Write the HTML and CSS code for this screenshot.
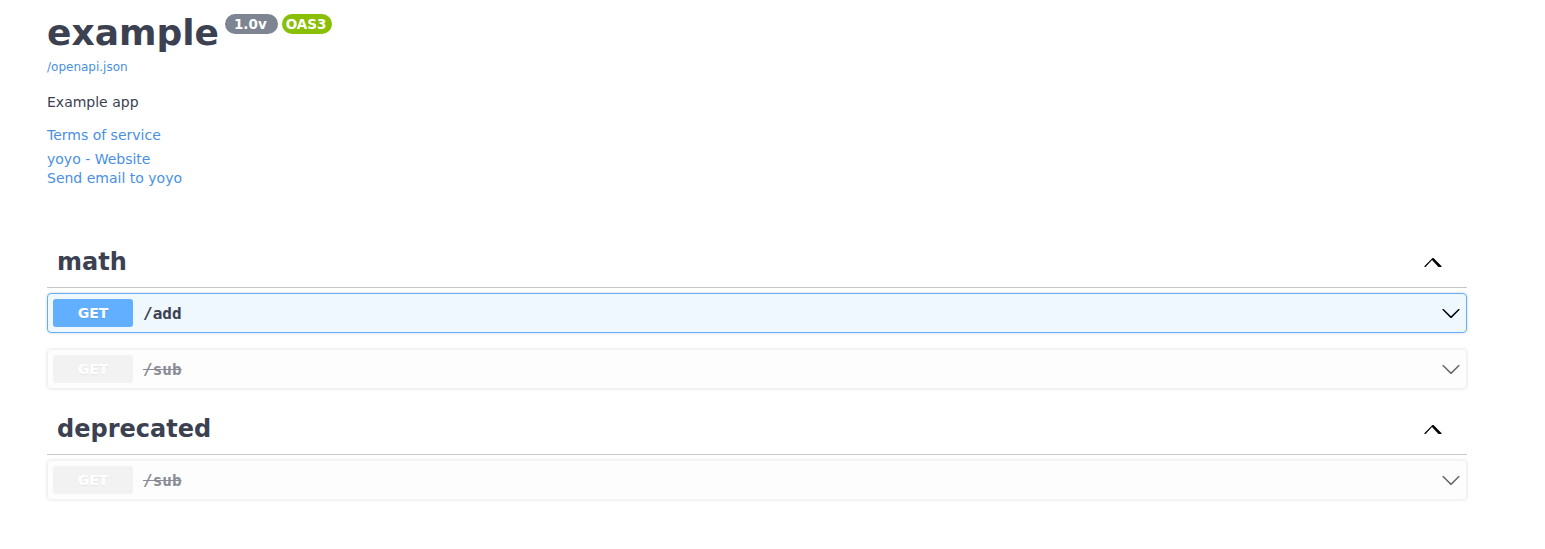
FILE: index.html
```
<!DOCTYPE html>
<html lang="en">
<head>
<meta charset="utf-8">
<title>example</title>
<link rel="stylesheet" href="styles.css">
</head>
<body>
<div class="wrapper">
  <div class="info">
    <div class="title-row">
      <h2 class="title">example</h2>
      <span class="stamp stamp-version">1.0v</span>
      <span class="stamp stamp-oas">OAS3</span>
    </div>
    <a class="spec-link" href="#">/openapi.json</a>
    <p class="description">Example app</p>
    <a class="info-link terms" href="#">Terms of service</a>
    <div class="contact">
      <a class="info-link contact-line" href="#">yoyo - Website</a>
      <a class="info-link contact-line contact-email" href="#">Send email to yoyo</a>
    </div>
  </div>

  <section class="tag-section">
    <h3 class="tag">
      <span class="tag-name">math</span>
      <svg class="tag-arrow" width="20" height="20" viewBox="0 0 20 20"><path d="M17.418 14.908c-.272.268-.709.268-.979 0L10 7.91l-6.439 6.998c-.271.268-.709.268-.979 0-.27-.268-.27-.701 0-.969l7.908-7.830c.27-.268.707-.268.979 0l7.908 7.830c.27.268.27.701 0 .969z"/></svg>
    </h3>
    <div class="opblock opblock-get">
      <span class="method">GET</span>
      <span class="path">/add</span>
      <svg class="op-arrow" width="20" height="20" viewBox="0 0 20 20"><path d="M17.418 6.109c.272-.268.709-.268.979 0s.271.701 0 .969l-7.908 7.83c-.27.268-.707.268-.979 0l-7.908-7.83c-.27-.268-.27-.701 0-.969.271-.268.709-.268.979 0L10 13.25l7.418-7.141z"/></svg>
    </div>
    <div class="opblock opblock-deprecated">
      <span class="method">GET</span>
      <span class="path">/sub</span>
      <svg class="op-arrow" width="20" height="20" viewBox="0 0 20 20"><path d="M17.418 6.109c.272-.268.709-.268.979 0s.271.701 0 .969l-7.908 7.83c-.27.268-.707.268-.979 0l-7.908-7.83c-.27-.268-.27-.701 0-.969.271-.268.709-.268.979 0L10 13.25l7.418-7.141z"/></svg>
    </div>
  </section>

  <section class="tag-section">
    <h3 class="tag">
      <span class="tag-name">deprecated</span>
      <svg class="tag-arrow" width="20" height="20" viewBox="0 0 20 20"><path d="M17.418 14.908c-.272.268-.709.268-.979 0L10 7.91l-6.439 6.998c-.271.268-.709.268-.979 0-.27-.268-.27-.701 0-.969l7.908-7.830c.27-.268.707-.268.979 0l7.908 7.830c.27.268.27.701 0 .969z"/></svg>
    </h3>
    <div class="opblock opblock-deprecated">
      <span class="method">GET</span>
      <span class="path">/sub</span>
      <svg class="op-arrow" width="20" height="20" viewBox="0 0 20 20"><path d="M17.418 6.109c.272-.268.709-.268.979 0s.271.701 0 .969l-7.908 7.83c-.27.268-.707.268-.979 0l-7.908-7.83c-.27-.268-.27-.701 0-.969.271-.268.709-.268.979 0L10 13.25l7.418-7.141z"/></svg>
    </div>
  </section>
</div>
</body>
</html>
```

FILE: styles.css
```
html, body {
  margin: 0;
  padding: 0;
  background: #fff;
}

body {
  font-family: "DejaVu Sans", sans-serif;
  color: #3b4151;
}

.wrapper {
  width: 1420px;
  margin: 0 0 0 47px;
}

.info {
  display: flex;
  flex-direction: column;
  align-items: flex-start;
  padding-top: 12px;
}

.title-row {
  display: flex;
  align-items: flex-start;
}

.title {
  margin: 0;
  font-size: 36px;
  line-height: 42px;
  font-weight: 700;
  color: #3b4151;
}

.stamp {
  margin-top: 2px;
  height: 20px;
  line-height: 20px;
  border-radius: 57px;
  color: #fff;
  font-size: 13.5px;
  font-weight: 700;
}

.stamp-version {
  margin-left: 6px;
  padding: 0 11px 0 9px;
  background: #7d8492;
}

.stamp-oas {
  margin-left: 4px;
  padding: 0 6px 0 4px;
  background: #89bf04;
}

.spec-link {
  margin-top: 5px;
  font-size: 12px;
  line-height: 16px;
  color: #4990e2;
  text-decoration: none;
}

.description {
  margin: 17px 0 0;
  font-size: 14px;
  line-height: 20px;
  color: #3b4151;
}

.info-link {
  font-size: 14px;
  color: #4990e2;
  text-decoration: none;
}

.terms {
  margin-top: 13px;
  line-height: 20px;
}

.contact {
  display: flex;
  flex-direction: column;
  align-items: flex-start;
  margin-top: 5px;
}

.contact-line {
  line-height: 18px;
}

.contact-email {
  margin-top: 1px;
}

.tag-section {
  display: flex;
  flex-direction: column;
}

.tag-section:first-of-type {
  margin-top: 51px;
}

.tag {
  box-sizing: border-box;
  height: 50px;
  margin: 0 0 5px;
  padding: 0 20px 1px 10px;
  display: flex;
  align-items: center;
  border-bottom: 1px solid rgba(59, 65, 81, 0.3);
  font-size: 24px;
  font-weight: 700;
  color: #3b4151;
}

.tag-name {
  flex: 1;
}

.tag-arrow {
  margin-right: 5px;
  fill: #000;
}

.opblock {
  box-sizing: border-box;
  height: 40px;
  margin: 0 0 16px;
  padding: 5px;
  display: flex;
  align-items: center;
  border: 1px solid #000;
  border-radius: 4px;
  box-shadow: 0 0 3px rgba(0, 0, 0, 0.19);
}

.method {
  min-width: 80px;
  padding: 6px 0;
  border-radius: 3px;
  text-align: center;
  font-size: 14px;
  line-height: 16px;
  font-weight: 700;
  color: #fff;
  text-shadow: 0 1px 0 rgba(0, 0, 0, 0.1);
}

.path {
  flex: 1;
  padding: 0 10px;
  font-family: "DejaVu Sans Mono", monospace;
  font-size: 16px;
  font-weight: 600;
  color: #3b4151;
}

.op-arrow {
  fill: #000;
}

.opblock-get {
  background: rgba(97, 175, 254, 0.1);
  border-color: #61affe;
}

.opblock-get .method {
  background: #61affe;
}

.opblock-deprecated {
  background: rgba(235, 235, 235, 0.1);
  border-color: #ebebeb;
  opacity: 0.6;
}

.opblock-deprecated .method {
  background: #ebebeb;
}

.opblock-deprecated .path {
  text-decoration: line-through;
}
```
